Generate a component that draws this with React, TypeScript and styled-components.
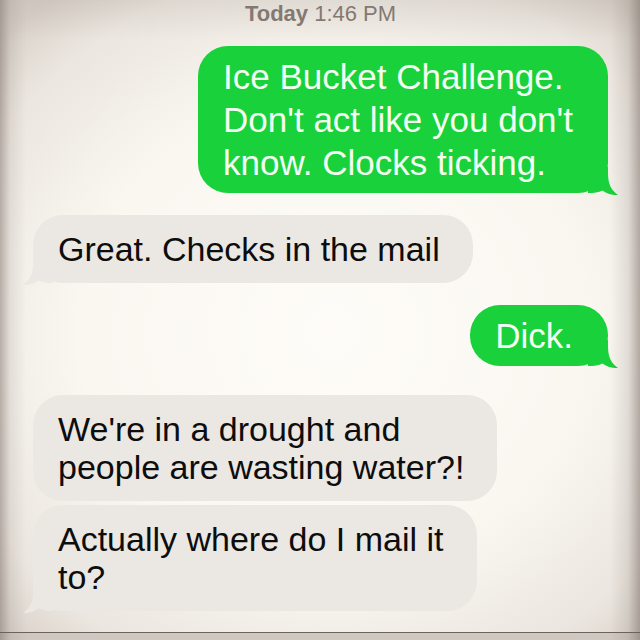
import React from 'react';
import styled, { createGlobalStyle } from 'styled-components';

const GlobalStyle = createGlobalStyle`
  html, body {
    margin: 0;
    padding: 0;
    background: #f4f0ea;
  }
`;

interface Message {
  id: number;
  text: string;
  out: boolean;
  tail: boolean;
  gap: number;
}

const messages: Message[] = [
  { id: 1, text: "Ice Bucket Challenge.\nDon't act like you don't\nknow. Clocks ticking.", out: true, tail: true, gap: 18 },
  { id: 2, text: 'Great. Checks in the mail', out: false, tail: true, gap: 22 },
  { id: 3, text: 'Dick.', out: true, tail: true, gap: 22 },
  { id: 4, text: "We're in a drought and\npeople are wasting water?!", out: false, tail: false, gap: 29 },
  { id: 5, text: 'Actually where do I mail it\nto?', out: false, tail: true, gap: 4 },
];

const Page = styled.div`
  position: relative;
  width: 640px;
  height: 640px;
  overflow: hidden;
  display: flex;
  flex-direction: column;
  font-family: 'Liberation Sans', Arial, sans-serif;
  background: radial-gradient(ellipse 72% 66% at 52% 52%, #fefcf8 0%, #faf7f1 55%, #ebe6df 86%, #d9d2ca 100%);

  &::after {
    content: '';
    position: absolute;
    inset: 0;
    pointer-events: none;
    background:
      linear-gradient(to right, rgba(110, 98, 90, 0.45) 0px, rgba(110, 98, 90, 0.12) 10px, rgba(110, 98, 90, 0) 26px),
      linear-gradient(to left, rgba(110, 98, 90, 0.5) 0px, rgba(110, 98, 90, 0.15) 12px, rgba(110, 98, 90, 0) 30px),
      linear-gradient(to bottom, rgba(120, 108, 98, 0.12) 0px, rgba(120, 108, 98, 0) 40px);
  }
`;

const Thread = styled.div`
  flex: 1;
  display: flex;
  flex-direction: column;
  padding: 0 32px 0 33px;
`;

const Stamp = styled.div`
  height: 28px;
  line-height: 28px;
  text-align: center;
  font-size: 22px;
  color: #857a73;

  b {
    font-weight: 700;
  }
`;

const Row = styled.div<{ $out: boolean; $gap: number }>`
  display: flex;
  justify-content: ${(p) => (p.$out ? 'flex-end' : 'flex-start')};
  margin-top: ${(p) => p.$gap}px;
`;

const Bubble = styled.div<{ $out: boolean }>`
  position: relative;
  border-radius: 30px;
  white-space: pre-line;
  background: ${(p) => (p.$out ? '#19d13a' : '#ebe7e2')};
  color: ${(p) => (p.$out ? '#f3fff2' : '#0d0d0d')};
  font-size: ${(p) => (p.$out ? 35 : 34)}px;
  line-height: ${(p) => (p.$out ? 43 : 38)}px;
  padding: ${(p) => (p.$out ? '9px 35px 9px 25px' : '15px 33px 15px 25px')};
`;

const Tail = styled.svg<{ $out: boolean }>`
  position: absolute;
  bottom: -2px;
  width: 30px;
  height: 28px;
  ${(p) => (p.$out ? 'right: -10px;' : 'left: -10px; transform: scaleX(-1);')}
`;

const Footer = styled.div`
  height: 7px;
  border-top: 1px solid #6b625c;
  background: #cfc8c0;
`;

const BubbleTail = ({ out }: { out: boolean }) => (
  <Tail $out={out} viewBox="0 0 30 28">
    <path
      d="M0 0 L20 0 L20 6 C20 17 23 23 30 28 C25 28.4 19 27 14.5 23.5 C10.5 25.5 6 26 0 26 Z"
      fill={out ? '#19d13a' : '#ebe7e2'}
    />
  </Tail>
);

const App: React.FC = () => {
  return (
    <Page>
      <GlobalStyle />
      <Thread>
        <Stamp>
          <b>Today</b> 1:46 PM
        </Stamp>
        {messages.map((m) => (
          <Row key={m.id} $out={m.out} $gap={m.gap}>
            <Bubble $out={m.out}>
              {m.text}
              {m.tail && <BubbleTail out={m.out} />}
            </Bubble>
          </Row>
        ))}
      </Thread>
      <Footer />
    </Page>
  );
};

export default App;
